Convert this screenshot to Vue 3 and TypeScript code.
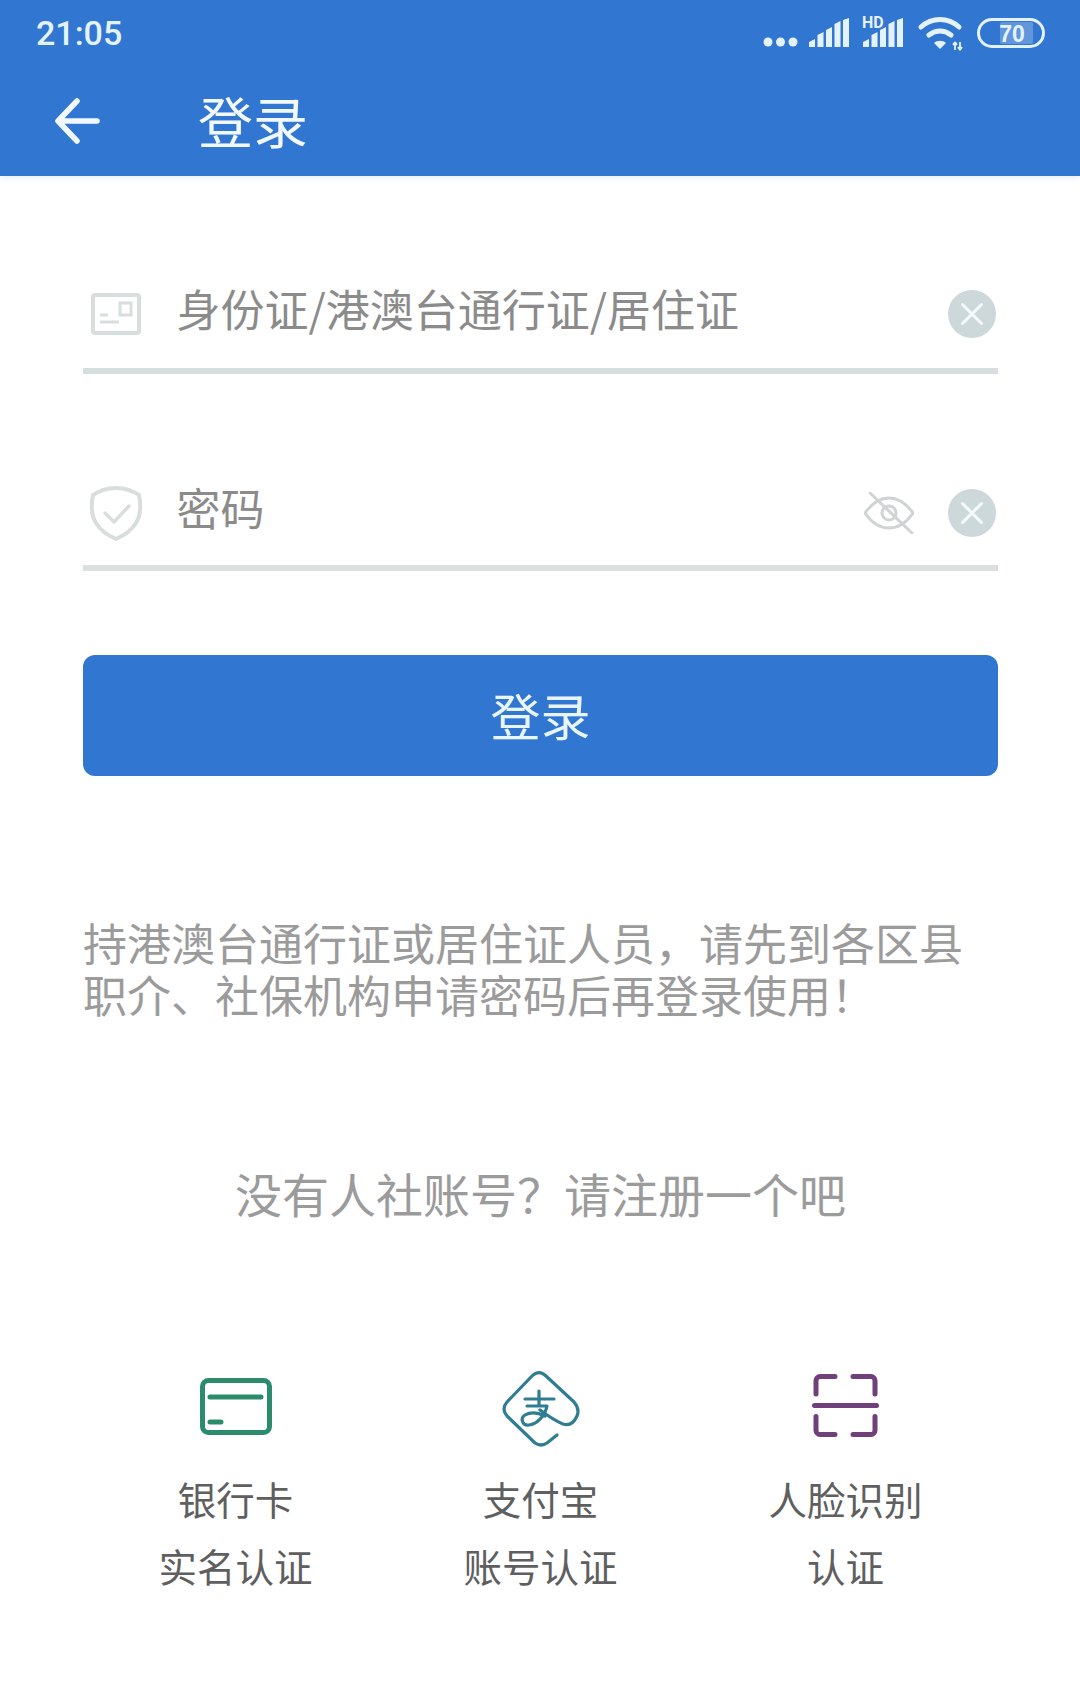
<template>
  <div class="page">
    <header class="appbar">
      <div class="status">
        <span class="time">21:05</span>
        <svg class="status-icons" width="290" height="44" viewBox="0 -4 290 44" fill="#e4f3fb">
          <!-- dots -->
          <circle cx="10" cy="27" r="4.5" />
          <circle cx="22.5" cy="27" r="4.5" />
          <circle cx="35" cy="27" r="4.5" />
          <!-- sim 1 -->
          <path d="M51 32v-5l6-3v8zM59.5 32V20l6-3v15zM68 32V15l6-3v20zM76.500 32V9l6-3v26zM85 32V5l6-2v29z" />
          <!-- sim 2 with HD tag -->
          <text x="104" y="13" class="hd">HD</text>
          <path d="M105 32v-5l6-3v8zM113.500 32V20l6-3v15zM122 32V15l6-3v20zM130.500 32V9l6-3v26zM139 32V5l6-2v29z" />
          <!-- wifi -->
          <g fill="none" stroke="#e4f3fb" stroke-width="5" stroke-linecap="round">
            <path d="M163 12c11-10 27-10 38 0" />
            <path d="M171 20c7-5 15-5 22 0" />
          </g>
          <path d="M176 28c3-3 9-3 12 0l-6 6z" />
          <path d="M197 35v-8m0 0l-2 3m2-3l2 3M202 27v8m0 0l-2-3m2 3l2-3" fill="none" stroke="#e4f3fb" stroke-width="1.8" />
          <!-- battery -->
          <rect x="242" y="7" width="33" height="22" rx="2" fill="#6296dc" />
          <rect x="220.500" y="4.500" width="65" height="27" rx="13.500" fill="none" stroke="#e4f3fb" stroke-width="3" />
          <text x="254" y="26.500" text-anchor="middle" class="batt">70</text>
        </svg>
      </div>
      <div class="titlebar">
        <svg class="back" width="46" height="46" viewBox="0 0 46 46" fill="none" stroke="#f2f9fe" stroke-width="5.500" stroke-linecap="round" stroke-linejoin="round">
          <path d="M42 23H3M22 3L3 23l19 20" />
        </svg>
        <span class="title">登录</span>
      </div>
    </header>

    <main class="body">
      <div class="field first">
        <span class="lead">
          <svg width="50" height="42" viewBox="0 0 50 42" fill="none" stroke="#d8dede" stroke-width="4">
            <rect x="2" y="2" width="46" height="38" rx="2" />
            <rect x="29" y="10" width="11" height="12" stroke-width="3" />
            <path d="M9 22h8M9 29h19" stroke-width="3" />
          </svg>
        </span>
        <span class="placeholder">身份证/港澳台通行证/居住证</span>
        <span class="clear">
          <svg width="22" height="22" viewBox="0 0 22 22" stroke="#f4fafa" stroke-width="3" stroke-linecap="round">
            <path d="M1.500 1.500l19 19M20.500 1.500l-19 19" />
          </svg>
        </span>
      </div>

      <div class="field second">
        <span class="lead shield">
          <svg width="54" height="56" viewBox="0 0 54 56" fill="none" stroke="#d9dddd" stroke-width="4" stroke-linejoin="round" stroke-linecap="round">
            <path d="M27 3C35 3 44 6 50 10C52 20 52 30 47 38C42 46 34 51 27 54C20 51 12 46 7 38C2 30 2 20 4 10C10 6 19 3 27 3z" />
            <path d="M16 28l9 9 15-16" stroke-width="3.400" />
          </svg>
        </span>
        <span class="placeholder">密码</span>
        <svg class="eye" width="50" height="42" viewBox="0 0 50 42" fill="none" stroke="#d1d4d4" stroke-width="3" stroke-linecap="round">
          <path d="M1 21C8 11 16 6 25 6s17 5 24 15c-7 10-15 15-24 15S8 31 1 21z" />
          <circle cx="25" cy="21" r="7" />
          <path d="M6 1l42 40" />
        </svg>
        <span class="clear">
          <svg width="22" height="22" viewBox="0 0 22 22" stroke="#f4fafa" stroke-width="3" stroke-linecap="round">
            <path d="M1.500 1.500l19 19M20.500 1.500l-19 19" />
          </svg>
        </span>
      </div>

      <button class="submit" type="button"><span>登录</span></button>

      <p class="notice">持港澳台通行证或居住证人员，请先到各区县职介、社保机构申请密码后再登录使用！</p>

      <p class="signup">没有人社账号？请注册一个吧</p>

      <ul class="methods">
        <li v-for="m in methods" :key="m.id" class="method">
          <svg width="90" height="90" viewBox="0 0 90 90" fill="none" stroke-linecap="round" stroke-linejoin="round">
            <g v-if="m.id === 'bank'" stroke="#2b8c6c" stroke-width="5">
              <rect x="11.500" y="15.500" width="67" height="52" rx="6" />
              <path d="M19 32h51M19 57h11" />
            </g>
            <g v-else-if="m.id === 'alipay'" stroke="#2f7d93" stroke-width="3.200" transform="translate(-1 -1)">
              <path d="M62 71L52 79Q46 83 40 79L12 52Q6 45 12 38L37 12Q44 5 51 12L79 38Q85 45 82 52Q77 63 68 60Q60 57 45 46" />
              <path d="M30 35H59M44 27V42M32 42H52C50 52 42 60 34 61C27 62 25 54 30 51C35 48 42 48 50 52" />
            </g>
            <g v-else stroke="#6f4079" stroke-width="5">
              <path d="M34 11.500H19c-2 0-4 2-4 4V29M52 11.500H70c2 0 4 2 4 4V29M13.500 40.500H75.500M15 51.500V65.500c0 2 2 4 4 4H34M74 51.500V65.500c0 2-2 4-4 4H52" />
            </g>
          </svg>
          <span class="method-label">{{ m.line1 }}<br />{{ m.line2 }}</span>
        </li>
      </ul>
    </main>
  </div>
</template>

<script setup lang="ts">
interface LoginMethod {
  id: string;
  line1: string;
  line2: string;
}

const methods: LoginMethod[] = [
  { id: "bank", line1: "银行卡", line2: "实名认证" },
  { id: "alipay", line1: "支付宝", line2: "账号认证" },
  { id: "face", line1: "人脸识别", line2: "认证" }
];
</script>

<style>
html,
body {
  background: #fff;
}
</style>

<style scoped>
.page {
  width: 1080px;
  min-height: 1699px;
  background: #fff;
  font-family: "Noto Sans CJK SC", "Noto Sans", sans-serif;
  overflow: hidden;
}

.appbar {
  height: 176px;
  background: #3176d0;
  box-shadow: 0 2px 6px rgba(49, 118, 208, 0.12);
  display: flex;
  flex-direction: column;
}

.status {
  height: 66px;
  padding: 0 32px 0 36px;
  display: flex;
  justify-content: space-between;
  align-items: center;
}

.time {
  font-family: Roboto, sans-serif;
  font-weight: 500;
  font-size: 34px;
  color: #e4f3fb;
}

.hd {
  font-family: Roboto, sans-serif;
  font-weight: 700;
  font-size: 16px;
  fill: #e4f3fb;
}

.batt {
  font-family: "Liberation Sans", sans-serif;
  font-weight: 700;
  font-size: 23px;
  fill: #e4f3fb;
}

.titlebar {
  flex: 1;
  padding-left: 55px;
  display: flex;
  align-items: center;
}

.title {
  margin-left: 97px;
  padding-bottom: 4px;
  font-size: 55px;
  color: #f2f9fe;
  line-height: 1;
}

.body {
  padding: 88px 82px 0 83px;
}

.field {
  height: 110px;
  border-bottom: 6px solid #d6dfe0;
  box-sizing: border-box;
  display: flex;
  align-items: center;
}

.field.first {
  padding-bottom: 4px;
}

.field.second {
  margin-top: 87px;
  border-bottom-color: #dcdfdf;
}

.lead {
  flex: none;
  width: 93.5px;
  padding-left: 8px;
  box-sizing: border-box;
  display: flex;
}

.lead.shield {
  padding-left: 6px;
}

.placeholder {
  padding-bottom: 12px;
  font-size: 44px;
  line-height: 56px;
  color: #8b8b8b;
}

.eye {
  margin-left: auto;
  margin-right: 34px;
}

.clear {
  margin-left: auto;
  margin-right: 2px;
  width: 48px;
  height: 48px;
  border-radius: 50%;
  background: #cdd8da;
  display: flex;
  align-items: center;
  justify-content: center;
}

.eye + .clear {
  margin-left: 0;
}

.submit {
  display: block;
  width: 100%;
  height: 121px;
  margin-top: 84px;
  padding: 0 0 3px;
  border: 0;
  border-radius: 12px;
  background: #3176d0;
  color: #e9f5fc;
  font-family: inherit;
  font-size: 50px;
}

.notice {
  margin: 140px 0 0;
  font-size: 44px;
  line-height: 52px;
  color: #9b9b9b;
}

.signup {
  margin: 143px 0 0;
  font-size: 47px;
  line-height: 60px;
  color: #9b9b9b;
  text-align: center;
}

.methods {
  list-style: none;
  margin: 142px 0 0;
  padding: 0;
  display: grid;
  grid-template-columns: repeat(3, 1fr);
}

.method {
  display: flex;
  flex-direction: column;
  align-items: center;
}

.method-label {
  margin-top: 10px;
  font-size: 38.5px;
  line-height: 67px;
  color: #5f5f5f;
  text-align: center;
}
</style>
